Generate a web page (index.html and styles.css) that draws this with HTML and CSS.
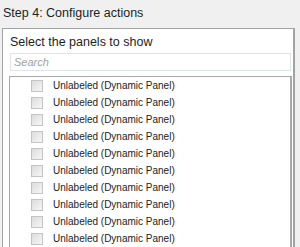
FILE: index.html
```html
<!DOCTYPE html>
<html lang="en">
<head>
  <meta charset="UTF-8" />
  <title>Configure actions</title>
  <link rel="stylesheet" href="styles.css">
</head>
<body>
  <div class="step-title">Step 4: Configure actions</div>
  <div class="panel">
    <div class="panel-title">Select the panels to show</div>
    <input class="search" type="text" placeholder="Search">
    <div class="list">
      <label class="row"><span class="box"></span>Unlabeled (Dynamic Panel)</label>
      <label class="row"><span class="box"></span>Unlabeled (Dynamic Panel)</label>
      <label class="row"><span class="box"></span>Unlabeled (Dynamic Panel)</label>
      <label class="row"><span class="box"></span>Unlabeled (Dynamic Panel)</label>
      <label class="row"><span class="box"></span>Unlabeled (Dynamic Panel)</label>
      <label class="row"><span class="box"></span>Unlabeled (Dynamic Panel)</label>
      <label class="row"><span class="box"></span>Unlabeled (Dynamic Panel)</label>
      <label class="row"><span class="box"></span>Unlabeled (Dynamic Panel)</label>
      <label class="row"><span class="box"></span>Unlabeled (Dynamic Panel)</label>
      <label class="row"><span class="box"></span>Unlabeled (Dynamic Panel)</label>
    </div>
  </div>
</body>
</html>
```

FILE: styles.css
```css
* {
  margin: 0;
  padding: 0;
  box-sizing: border-box;
}

body {
  font-family: 'Liberation Sans', Arial, sans-serif;
  background: #f0f0f0;
  color: #1e1e1e;
  height: 247px;
  overflow: hidden;
}

.step-title {
  font-size: 12.5px;
  padding: 6px 0 0 3px;
  height: 28px;
}

.panel {
  margin-left: 2px;
  width: 293px;
  height: 230px;
  background: #fff;
  border: 1px solid #a3a3a3;
  border-right-width: 2px;
  padding: 6px 4px 0 6px;
}

.panel-title {
  font-size: 12.5px;
  height: 18px;
  padding-left: 1px;
}

.search {
  display: block;
  width: 281px;
  height: 18px;
  margin-left: 1px;
  border: 1px solid #dfe3ea;
  padding: 0 3px;
  font-family: 'Liberation Sans', Arial, sans-serif;
  font-size: 11px;
  outline: none;
}

.search::placeholder {
  color: #a0a0a0;
  font-style: italic;
}

.list {
  margin-top: 5px;
  width: 283px;
  height: 200px;
  border: 1px solid #a8a8a8;
  border-right-width: 2px;
}

.row {
  display: flex;
  align-items: center;
  height: 17px;
  padding-left: 21px;
  font-size: 10px;
  color: #222;
}

.box {
  width: 12px;
  height: 12px;
  margin-right: 10px;
  border: 1px solid #c4c4c4;
  background: linear-gradient(135deg, #dcdcdc, #f6f6f6);
}
```
